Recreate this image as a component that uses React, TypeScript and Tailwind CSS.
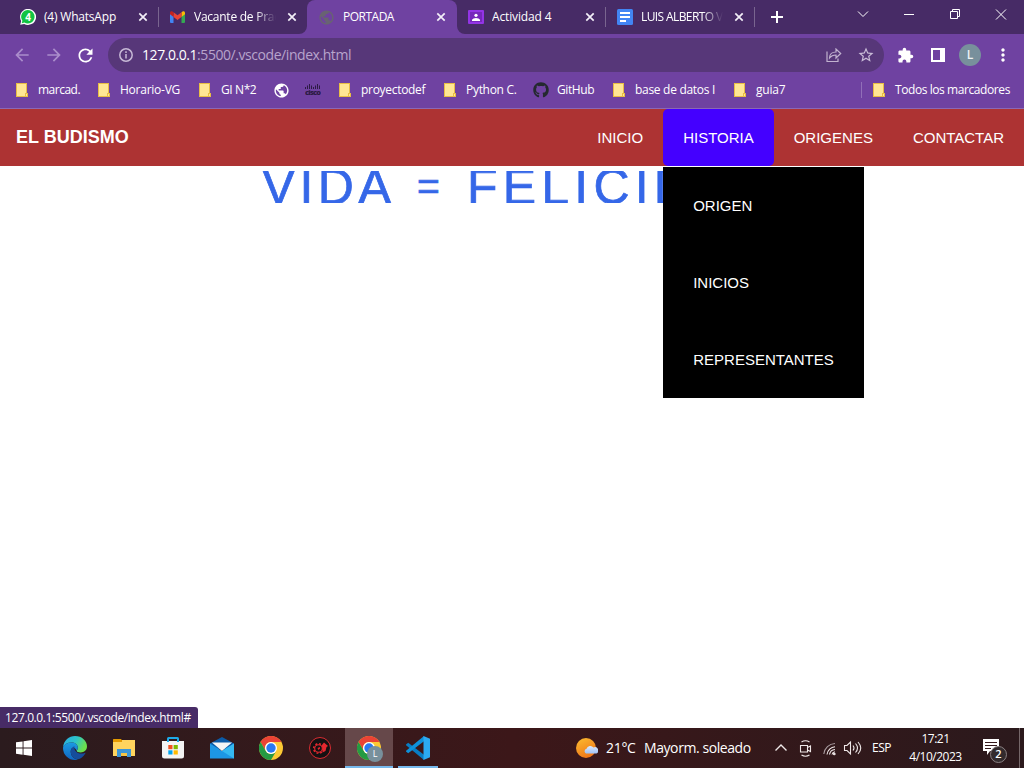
import type { ReactNode } from 'react';
import { MdArrowBack, MdArrowForward, MdRefresh, MdStarBorder, MdExtension, MdPublic, MdMoreVert } from 'react-icons/md';
import { FaGithub } from 'react-icons/fa';

const WhatsApp = () => (
  <svg width="16" height="16" viewBox="0 0 16 16">
    <path d="M.2 15.8 1.2 12A8 8 0 1 1 4.2 14.9Z" fill="#fff" />
    <path d="M1.700 14.300 2.400 11.700A6.700 6.700 0 1 1 4.500 13.600Z" fill="#12c443" />
    <text x="8" y="11.700" textAnchor="middle" fontSize="10" fontWeight="700" fill="#fff" fontFamily="Open Sans">4</text>
  </svg>
);

const Gmail = () => (
  <svg width="15" height="12" viewBox="0 0 15 12">
    <path d="M0 2v9q0 1 1 1h2.500V4.500Z" fill="#4285f4" />
    <path d="M15 2v9q0 1-1 1h-2.500V4.500Z" fill="#34a853" />
    <path d="M11.500 1.200 13 .3Q15-.3 15 2v1.200l-3.500 2.700Z" fill="#fbbc04" />
    <path d="M3.500 1.200 7.500 4.300 11.500 1.200V5.900L7.500 9 3.500 5.900Z" fill="#ea4335" />
    <path d="M3.500 1.200 2 .3Q0-.3 0 2v1.200l3.500 2.700Z" fill="#c5221f" />
  </svg>
);

const Classroom = () => (
  <svg width="16" height="14" viewBox="0 0 16 14">
    <rect width="16" height="14" rx="1" fill="#9334e6" />
    <rect x="2" y="2" width="12" height="10" fill="#7627bb" />
    <circle cx="8" cy="5.300" r="1.600" fill="#fff" />
    <path d="M4 11V9.800Q5 8 8 8t4 1.800V11Z" fill="#fff" />
  </svg>
);

const Docs = () => (
  <svg width="16" height="16" viewBox="0 0 16 16">
    <rect width="16" height="16" rx="1.500" fill="#4285f4" />
    <path d="M3 4h10M3 8h10M3 12h6" stroke="#fff" strokeWidth="2" />
  </svg>
);

const Cisco = () => (
  <svg width="16" height="12" viewBox="0 0 16 12">
    <path d="M.5 3v2M2.500 1.500v3.500M4.500 0v5M6.500 1.500v3.500M8.500 3v2M10.500 1.500v3.500M12.500 0v5M14.500 1.500v3.500" stroke="#2d1b45" strokeWidth="1" />
    <text x="8" y="11.200" textAnchor="middle" textLength="16" fontSize="7.500" fontWeight="800" fill="#2d1b45" fontFamily="Open Sans">cisco</text>
  </svg>
);

const Folder = () => (
  <svg width="12" height="14" viewBox="0 0 12 14">
    <path d="M0 0h11v10h1v4H0Z" fill="#e8be45" />
    <path d="M1 1h9v9H9v3H1Z" fill="#ffe694" />
    <path d="M10 11h1v2h-1Z" fill="#ffe694" />
  </svg>
);

const Close = () => (
  <svg width="10" height="10" viewBox="0 0 10 10" stroke="#f3eff8" strokeWidth="1.700">
    <path d="m1.300 1.300 7.400 7.400m0-7.400-7.400 7.400" />
  </svg>
);

type TabProps = { icon: ReactNode; title: string; titleClass?: string; closeClass?: string; active?: boolean; fade?: boolean; sep?: boolean };

const Tab = ({ icon, title, titleClass = '', closeClass = 'pr-[10px]', active, fade, sep }: TabProps) => (
  <div className={`relative flex h-[34px] shrink-0 items-center pl-3 ${active ? 'z-10 -mr-px w-[150px] rounded-t-lg bg-[#6f42a1]' : 'w-[149px]'}`}>
    {active && (
      <>
        <svg className="absolute bottom-0 -left-2" width="8" height="8"><path d="M8 0v8H0a8 8 0 0 0 8-8" fill="#6f42a1" /></svg>
        <svg className="absolute -right-2 bottom-0" width="8" height="8"><path d="M0 0v8h8a8 8 0 0 1-8-8" fill="#6f42a1" /></svg>
      </>
    )}
    <span className="flex w-6 shrink-0 items-center">{icon}</span>
    <span className={`w-[82px] overflow-hidden text-xs leading-4 whitespace-nowrap text-white ${fade ? '[mask-image:linear-gradient(to_right,black_75%,transparent)]' : ''} ${titleClass}`}>{title}</span>
    <span className={`ml-auto flex ${closeClass}`}><Close /></span>
    {sep && <span className="absolute top-[7px] -right-px h-5 w-px bg-[#79658f]" />}
  </div>
);

const bookmarks: { label?: string; icon?: ReactNode; cell: string; gap?: string; text?: string }[] = [
  { label: 'marcad.', cell: 'w-[82px]', text: 'tracking-[-0.5px]' },
  { label: 'Horario-VG', cell: 'w-[101px]', text: 'tracking-[-0.25px]' },
  { label: 'GI N*2', cell: 'w-[75px]', text: 'tracking-[-0.4px]' },
  { icon: <MdPublic size={17} color="#fff" className="-ml-[1.5px] shrink-0" />, cell: 'w-[31px]' },
  { icon: <Cisco />, cell: 'w-[34px]' },
  { label: 'proyectodef', cell: 'w-[105px]', text: 'tracking-[-0.3px]' },
  { label: 'Python C.', cell: 'w-[89px]', text: 'tracking-[-0.3px]' },
  { label: 'GitHub', icon: <FaGithub size={16} color="#24292f" />, cell: 'w-[80px]', gap: 'w-6', text: 'tracking-[-0.4px]' },
  { label: 'base de datos I', cell: 'w-[121px]', text: 'tracking-[-0.3px]' },
  { label: 'guia7', cell: 'w-[127px]', text: 'tracking-[-0.2px]' },
];

const Chrome = () => (
  <header className="flex h-[109px] flex-col border-b border-[#8b68b5] bg-[#6f42a1]">
    <div className="flex h-[34px] bg-[#472b66] pl-2">
      <div className="w-[151px] shrink-0"><Tab icon={<WhatsApp />} title="(4) WhatsApp" titleClass="tracking-[-0.2px]" closeClass="pr-[9px]" /></div>
      <span className="mt-[7px] -ml-px h-5 w-px shrink-0 bg-[#79658f]" />
      <div className="-ml-px w-[149px] shrink-0"><Tab icon={<Gmail />} title="Vacante de Prac" titleClass="tracking-[-0.25px]" fade /></div>
      <Tab icon={<MdPublic size={17} color="#686372" className="-ml-px" />} title="PORTADA" titleClass="tracking-[-0.5px]" closeClass="pr-[11px]" active />
      <Tab icon={<Classroom />} title="Actividad 4" titleClass="tracking-[-0.15px]" sep />
      <Tab icon={<Docs />} title="LUIS ALBERTO V" titleClass="tracking-[-0.6px]" fade sep />
      <svg className="mt-[11px] ml-[17px] shrink-0" width="12" height="12"><path d="M6 0v12M0 6h12" stroke="#fff" strokeWidth="2" /></svg>
      <svg className="mt-2 ml-[74px] shrink-0" width="152" height="14" fill="none" stroke="#fff" strokeWidth="1">
        <path d="m1 3.500 5 5 5-5M47 6.500h10M93.500 3.500h7v7h-7zM95.500 3.500v-2h7v7h-2M139 1.500l10 10m0-10-10 10" />
      </svg>
    </div>
    <div className="flex h-[42px] items-center pl-3">
      <MdArrowBack size={20} color="#aa8dcb" />
      <MdArrowForward size={20} color="#aa8dcb" className="ml-3" />
      <MdRefresh size={21} color="#fff" className="ml-[11px]" />
      <div className="ml-3 flex h-[34px] w-[776px] items-center rounded-full bg-[#573779] pr-2 pl-[11px]">
        <svg width="14" height="14" fill="none" stroke="#c7b9d6" strokeWidth="1.500"><circle cx="7" cy="7" r="6.200" /><path d="M7 6v4.500M7 3.300v1.600" /></svg>
        <span className="ml-[9px] text-sm whitespace-nowrap text-[#b7a4cc] tracking-[-0.44px]"><span className="text-white">127.0.0.1</span>:5500/.vscode/index.html</span>
        <svg className="ml-auto" width="16" height="14" fill="none" stroke="#c1b2cf" strokeWidth="1.200">
          <path d="M1 3.500v10h11v-3M3.500 10c0-4 3-6 6.500-6V1l4.700 4.500L10 10V7C7 7 5 8 3.500 10Z" />
        </svg>
        <MdStarBorder size={18} color="#c9bcd7" className="mx-[15px] mr-[1px]" />
      </div>
      <MdExtension size={17} color="#fff" className="ml-[13px]" />
      <svg className="ml-[17px]" width="14" height="14"><path d="M1 1h12v12H1Z" fill="none" stroke="#fff" strokeWidth="2" /><path d="M9 1h4v12H9Z" fill="#fff" /></svg>
      <span className="ml-[14px] flex size-[22px] items-center justify-center rounded-full bg-[#78909c] text-[12px] font-semibold text-[#eef2f4]">L</span>
      <MdMoreVert size={20} color="#fff" className="ml-3" />
    </div>
    <div className="flex h-[28px] items-center pl-4 text-xs text-white">
      {bookmarks.map((b, i) => (
        <div key={i} className={`flex shrink-0 items-center ${b.cell}`}>
          <span className={`flex shrink-0 ${b.gap ?? 'w-[22px]'}`}>{b.icon ?? <Folder />}</span>
          {b.label && <span className={`whitespace-nowrap ${b.text ?? ''}`}>{b.label}</span>}
        </div>
      ))}
      <span className="h-4 w-px shrink-0 bg-[#916fb8]" />
      <span className="ml-[11px] flex w-[22px] shrink-0"><Folder /></span>
      <span className="whitespace-nowrap tracking-[-0.42px]">Todos los marcadores</span>
    </div>
  </header>
);

const Site = () => (
  <main className="flex h-[619px] flex-col bg-white font-['Liberation_Sans',Arial,sans-serif]">
    <nav className="flex h-[57px] shrink-0 items-stretch bg-[#ad3333] pl-4 text-[15px] text-white">
      <h1 className="mr-auto pt-[15px] text-lg leading-[27px] font-bold">EL BUDISMO</h1>
      <a className="flex items-center pt-[2px] pr-[19.5px] pl-5">INICIO</a>
      <div className="relative flex w-[111px] items-center rounded-[5px] bg-[#4400ff] pt-[2px] pl-[20.5px]">
        HISTORIA
        <ul className="absolute top-[58px] left-0 z-10 w-[201px] bg-black">
          <li className="flex h-[77px] items-center pt-[2px] pl-[30.5px]">ORIGEN</li>
          <li className="flex h-[77px] items-center pt-[2px] pl-[30.5px]">INICIOS</li>
          <li className="flex h-[77px] items-center pt-[2px] pl-[30.5px]">REPRESENTANTES</li>
        </ul>
      </div>
      <a className="flex items-center px-5 pt-[2px]">ORIGENES</a>
      <a className="flex items-center px-5 pt-[2px]">CONTACTAR</a>
    </nav>
    <div className="mt-[5px] ml-[262px] flex h-8 w-[401px] overflow-hidden text-[50px] leading-[32px] whitespace-nowrap text-[#3567e8] [-webkit-text-stroke:0.7px_#3567e8]">
      <span className="w-[155px] shrink-0 tracking-[4.200px]">VIDA</span>
      <span className="w-[50px] shrink-0 text-[39px]">=</span>
      <span className="tracking-[5.200px]">FELICID</span>
    </div>
    <div className="mt-auto flex h-[21px] w-[198px] items-center rounded-tr-[3px] bg-[#472b66] pl-[5px] font-['Open_Sans','Noto_Sans',sans-serif] text-xs whitespace-nowrap text-white tracking-[-0.4px]">127.0.0.1:5500/.vscode/index.html#</div>
  </main>
);

const ChromeLogo = () => (
  <svg width="24" height="24" viewBox="0 0 24 24">
    <circle cx="12" cy="12" r="12" fill="#fcc934" />
    <path d="M1.600 6A12 12 0 0 1 22.400 6H12a6 6 0 0 0-5.200 9Z" fill="#ea4335" />
    <path d="M1.600 6A12 12 0 0 0 12 24l5.200-9A6 6 0 0 1 6.800 15Z" fill="#259a43" />
    <circle cx="12" cy="12" r="6" fill="#fff" />
    <circle cx="12" cy="12" r="4.700" fill="#2979f2" />
  </svg>
);

const Edge = () => (
  <svg width="24" height="24" viewBox="0 0 24 24">
    <defs>
      <linearGradient id="edgeTop" x1="0" y1="0" x2="1" y2=".4"><stop stopColor="#28a9e5" /><stop offset=".55" stopColor="#2dc4c9" /><stop offset="1" stopColor="#6be04c" /></linearGradient>
      <linearGradient id="edgeLow" x1="0" y1="0" x2="0" y2="1"><stop stopColor="#1b9be2" /><stop offset="1" stopColor="#1065c0" /></linearGradient>
    </defs>
    <path d="M.1 11C.8 4.500 6 0 12 0c7 0 12 5 12 10.300 0 4-3 6.200-6.300 6.200-2.600 0-4-.8-4-1.700 0-.7 1.100-1.200 1.100-3.100C14.800 8.500 12 6.500 8.500 6.500 4.600 6.500 1.500 8.500.1 11Z" fill="url(#edgeTop)" />
    <path d="M0 12c0-3 4-5.500 8.500-5.500 3.500 0 6.300 2 6.300 5.200 0 1.900-1.100 2.400-1.100 3.100-2-5-6-3.500-6 .7 0 4.500 3.300 7.700 7.300 7.700-1 .5-2 .8-3 .8A12 12 0 0 1 0 12Z" fill="url(#edgeLow)" />
    <path d="M7.700 15.500c0-3 2-5 4-5-.6 1.500-.3 3 .9 4.400 2 2.700 6 3.400 9.100 2 .7-.3 1 .2.6.7-2 3.300-4.700 5.600-7.300 5.600-4 0-7.300-3.200-7.300-7.700Z" fill="#164d9b" />
  </svg>
);

const Explorer = () => (
  <svg width="22" height="20" viewBox="0 0 22 20">
    <path d="M0 1.500Q0 1 .5 1H8l2 2.500H0Z" fill="#e69b00" />
    <path d="M0 3h22v15H0Z" fill="#ffd45e" />
    <path d="M0 3h9v1H0Z" fill="#e69b00" />
    <path d="M9 2h13v2H9Z" fill="#ffd45e" />
    <path d="M4 11h14v8h-4v-4H8v4H4Z" fill="#3c96d6" />
    <path d="M8 15h6v3H8Z" fill="#f6c444" />
  </svg>
);

const Store = () => (
  <svg width="24" height="24" viewBox="0 0 24 24">
    <path d="M1 5h22v15q0 2.500-2.500 2.500h-17Q1 22.500 1 20Z" fill="#f4f4f4" />
    <path d="M7 6V2.500Q7 2 7.500 2h9q.5 0 .5.500V6" stroke="#1eaae9" strokeWidth="2" fill="none" />
    <path d="M7.300 9h4.200v4.200H7.300Z" fill="#f25022" /><path d="M12.600 9h4.200v4.200h-4.200Z" fill="#7fba00" />
    <path d="M7.300 14.300h4.200v4.200H7.300Z" fill="#00a4ef" /><path d="M12.600 14.300h4.200v4.200h-4.200Z" fill="#ffb900" />
  </svg>
);

const Mail = () => (
  <svg width="24" height="22" viewBox="0 0 24 22">
    <path d="M0 6.500 12 0l12 6.500V12H0Z" fill="#0b5ba8" />
    <path d="M0 6.500 12 14l12-7.500v15H0Z" fill="#1d97e4" />
    <path d="M2 5.500h20L12 14Z" fill="#f5f5f5" />
    <path d="M24 6.500v15L12 14Z" fill="#35b9f1" />
  </svg>
);

const GearBird = () => (
  <svg width="24" height="24" viewBox="0 0 24 24">
    <circle cx="12" cy="12" r="10.500" fill="#151112" stroke="#d92c32" strokeWidth="1" />
    <circle cx="10.500" cy="12.500" r="4.800" fill="none" stroke="#e5282f" strokeWidth="1.600" strokeDasharray="1.900 1.870" />
    <circle cx="10.500" cy="12.500" r="3.800" fill="none" stroke="#e5282f" strokeWidth="1.100" />
    <path d="m9.500 12 2.500-1v1.500l-1.500 1.500ZM13.500 9.500l2.500-3 4 3.500-1.500 1-1 4-3 1.500v-4.500Z" fill="#e5282f" />
  </svg>
);

const VsCode = () => (
  <svg width="24" height="24" viewBox="0 0 24 24">
    <path d="m0 8.500 2.200-1.800 15.800 12V24L.4 9.600Q-.2 9 0 8.500Z" fill="#087dc4" />
    <path d="m0 15.500 2.200 1.800L18 5.300V0L.4 14.400Q-.2 15 0 15.500Z" fill="#0e91da" />
    <path d="m17.500 0 6.500 2.800v18.400L17.500 24Z" fill="#2caaf1" />
  </svg>
);

const Tray = () => (
  <svg className="shrink-0" width="92" height="20" viewBox="0 0 92 20" fill="none" stroke="#efe8e8" strokeWidth="1.100">
    <path d="m2.500 12.500 5.500-5.500 5.500 5.500" strokeWidth="1.400" />
    <path d="M27.500 7.500h7v6.500h-7zM34.500 9.500l3-1.500v5.500l-3-1.500M28.500 4q4-2.500 8 0M28.500 17q4 2.500 8 0" />
    <g transform="translate(50 3)">
      <path d="M.8 13A11.700 11.700 0 0 1 12 2.500" stroke="#a99ca0" />
      <path d="M4 13.500a9 9 0 0 1 8-7.800M6.500 13.500a6 6 0 0 1 5.500-5M9 13.500a3.500 3.500 0 0 1 3-2.700" />
      <circle cx="11.300" cy="13" r=".8" fill="#efe8e8" />
    </g>
    <path d="M71.500 7.500H74L77.500 4v12L74 12.500h-2.500ZM80 7.500q2 2.500 0 5M82.500 5.500q4 4.500 0 9M85 4q5.500 6 0 12" />
  </svg>
);

const Taskbar = () => (
  <footer className="flex h-10 items-stretch bg-linear-to-r from-[#2b1b1e] via-[#3c1719] to-[#2b191c] text-white">
    <div className="flex w-12 shrink-0 items-center justify-center">
      <svg width="16" height="16" fill="#fff"><path d="M0 2.300 6.600 1.400V7.600H0ZM7.500 1.200 16 0v7.600H7.500ZM0 8.400h6.600v6.300L0 13.700ZM7.500 8.400H16V16l-8.500-1.200Z" /></svg>
    </div>
    <div className="ml-[2px] flex">
      {[<Edge />, <Explorer />, <Store />, <Mail />, <ChromeLogo />, <GearBird />].map((icon, i) => (
        <div key={i} className="flex w-[49px] shrink-0 items-center justify-center">{icon}</div>
      ))}
      <div className="relative ml-px flex w-12 items-center justify-center border-b-2 border-[#76b9ed] bg-[#66484a] pt-[2px]">
        <ChromeLogo />
        <span className="absolute top-[18px] left-[22px] flex size-4 items-center justify-center rounded-full bg-[#78909c] text-[9px]">L</span>
      </div>
      <div className="ml-[5px] flex w-10 items-center justify-center border-b-2 border-[#76b9ed] pt-[2px]"><VsCode /></div>
    </div>
    <svg className="mt-[9px] ml-[138px] shrink-0" width="22" height="22" viewBox="0 0 22 22">
      <defs>
        <linearGradient id="sun" x1="0" y1="0" x2=".5" y2="1"><stop stopColor="#fbbd30" /><stop offset="1" stopColor="#f07819" /></linearGradient>
        <linearGradient id="cloud" x1="0" y1="0" x2="0" y2="1"><stop stopColor="#dceaff" /><stop offset="1" stopColor="#9fc2f5" /></linearGradient>
      </defs>
      <circle cx="10" cy="11" r="10" fill="url(#sun)" />
      <path d="M10 16.500a2.500 2.500 0 0 1 .5-4.700 4 4 0 0 1 7-1.300 3 3 0 0 1 3 6Z" fill="url(#cloud)" />
    </svg>
    <span className="ml-2 flex w-[38px] shrink-0 items-center text-sm tracking-[-0.3px]">21°C</span>
    <span className="flex w-[129px] shrink-0 items-center text-sm whitespace-nowrap tracking-[-0.42px]">Mayorm. soleado</span>
    <span className="flex items-center"><Tray /></span>
    <span className="ml-[7px] flex w-[36px] items-center text-xs tracking-[-0.5px]">ESP</span>
    <div className="flex w-[55px] flex-col items-center pt-[2px] text-xs leading-[18px] whitespace-nowrap tracking-[-0.5px]">
      <span>17:21</span>
      <span>4/10/2023</span>
    </div>
    <div className="relative ml-[19px] h-10 w-[37px]">
      <svg className="mt-[11px] ml-px" width="16" height="16"><path d="M0 0h16v12H7l-3 4v-4H0Z" fill="#fff" /><path d="M2 3.500h12M2 6.500h12M2 9.500h6" stroke="#35191c" /></svg>
      <span className="absolute top-[18px] left-[8px] flex size-[17px] items-center justify-center rounded-full border border-[#8a8082] bg-[#332b2d] text-[11px] font-semibold">2</span>
    </div>
    <span className="w-px shrink-0 bg-[#756769]" />
  </footer>
);

export default function App() {
  return (
    <div className="h-[768px] w-[1024px] overflow-hidden bg-white font-['Open_Sans','Noto_Sans',sans-serif]">
      <Chrome />
      <Site />
      <Taskbar />
    </div>
  );
}
